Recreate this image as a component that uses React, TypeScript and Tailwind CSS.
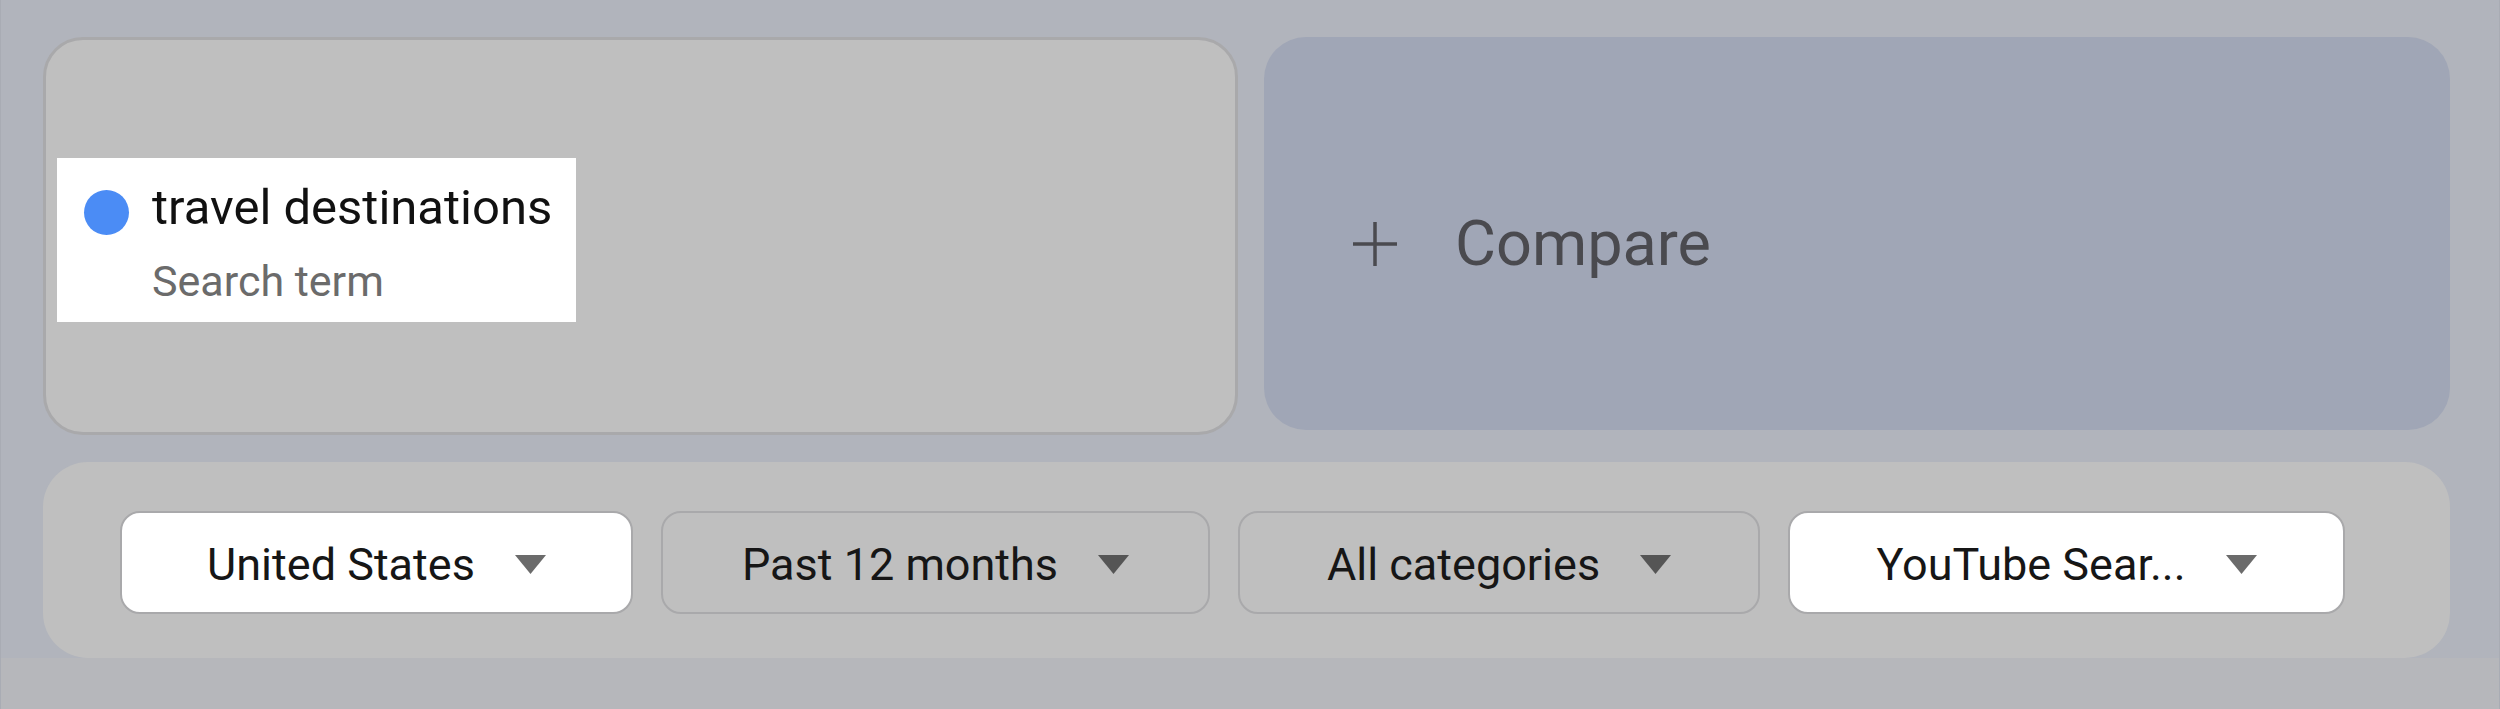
const font = { fontFamily: "Roboto, 'Noto Sans', sans-serif" };

const filters = [
  { label: "United States", width: "w-[513px]", active: true },
  { label: "Past 12 months", width: "w-[549px]", active: false },
  { label: "All categories", width: "w-[522px]", active: false },
  { label: "YouTube Sear...", width: "w-[557px]", active: true },
];

function Caret({ color }: { color: string }) {
  return (
    <svg width="31" height="19" viewBox="0 0 31 19" className="shrink-0">
      <polygon points="0,0 31,0 15.5,19" fill={color} />
    </svg>
  );
}

function PlusIcon() {
  return (
    <svg width="44" height="44" viewBox="0 0 44 44" className="shrink-0">
      <path d="M22 0v44M0 22h44" stroke="#4a4a4f" strokeWidth={3.5} />
    </svg>
  );
}

export default function App() {
  return (
    <div className="w-[2500px] h-[709px] overflow-hidden border-x border-[#a9acb4]" style={font}>
      <div className="bg-[#b1b4bc] pt-[37px] pl-[42px] pr-[49px]">
        {/* Term + compare */}
        <div className="flex items-start gap-[26px]">
          <div className="flex h-[398px] w-[1195px] items-center rounded-[40px] border-[3px] border-[#a9a9ab] bg-[#bfbfbf] pl-[11px] pt-[8px]">
            <div className="flex w-[519px] items-start bg-white pt-[22px] pb-[16px] pl-[27px]">
              <div className="mt-[10px] h-[45px] w-[45px] shrink-0 rounded-full bg-[#4b8cf5]" />
              <div className="ml-[23px] flex flex-col gap-[20px]">
                <p className="text-[49px] leading-[56px] text-[#111111]">travel destinations</p>
                <p className="text-[43px] leading-[50px] text-[#6b6b6b]">Search term</p>
              </div>
            </div>
          </div>

          <div className="flex h-[393px] flex-1 items-center gap-[58px] rounded-[42px] bg-[#a0a6b6] pl-[89px] pt-[20px]">
            <PlusIcon />
            <span className="text-[63px] leading-none text-[#4a4a4f]">Compare</span>
          </div>
        </div>

        {/* Filter bar */}
        <div className="mt-[27px] flex h-[196px] items-center gap-[28px] rounded-[45px] bg-[#bfbfbf] pl-[77px] pt-[5px]">
          {filters.map((f) => (
            <div
              key={f.label}
              className={`flex h-[103px] ${f.width} items-center justify-center gap-[40px] rounded-[20px] border-2 border-[#a9a9ab] pt-[4px] ${
                f.active ? "bg-white" : "bg-[#bfbfbf]"
              }`}
            >
              <span className="text-[45px] leading-none text-[#161616]">{f.label}</span>
              <Caret color={f.active ? "#6b6b6b" : "#555555"} />
            </div>
          ))}
        </div>
      </div>
      <div className="h-[51px] bg-[#b6b7bb]" />
    </div>
  );
}
